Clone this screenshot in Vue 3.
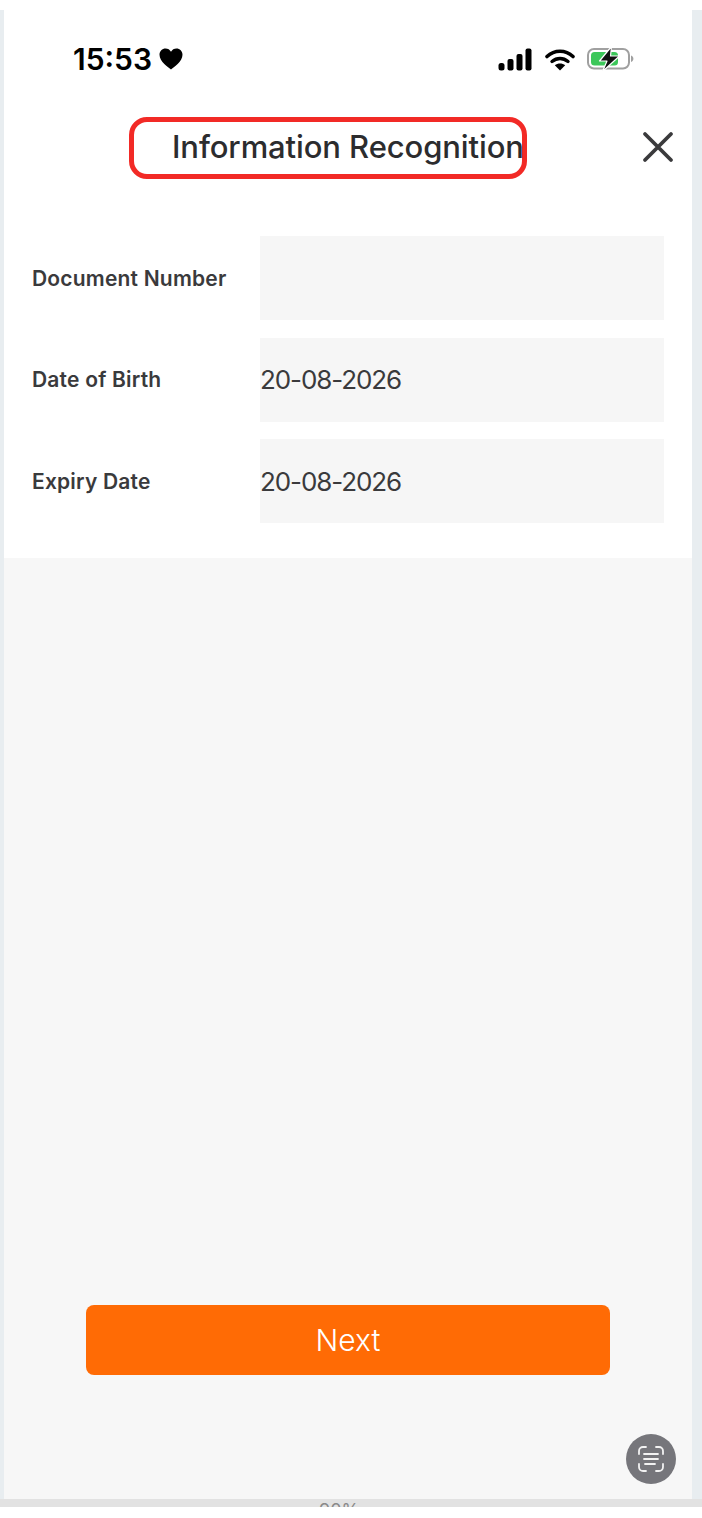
<template>
  <div class="page">
    <div class="shell">
      <div class="screen">
        <div class="status-bar">
          <div class="status-left">
            <span class="time">15:53</span>
            <svg class="heart" width="24" height="22" viewBox="0 0 24 22">
              <path d="M12 21.5C9.5 19.6 0.5 13.8 0.5 6.8 0.5 3 3.3 0.5 6.5 0.5 8.900 0.5 10.900 1.700 12 3.800 13.100 1.700 15.100 0.500 17.500 0.500 20.700 0.500 23.500 3 23.500 6.800 23.500 13.800 14.500 19.600 12 21.500Z" fill="#000" />
            </svg>
          </div>
          <div class="status-right">
            <svg width="35" height="23" viewBox="0 0 35 23">
              <rect x="0.500" y="15" width="6" height="7.500" rx="2.500" fill="#000" />
              <rect x="9.500" y="11" width="6" height="11.500" rx="2" fill="#000" />
              <rect x="18.500" y="6" width="6" height="16.500" rx="2" fill="#000" />
              <rect x="27.500" y="0.500" width="6" height="22" rx="2" fill="#000" />
            </svg>
            <svg width="30" height="23" viewBox="0 0 30 23">
              <path d="M2 8.500C9.500 1.500 20.500 1.500 28 8.500" fill="none" stroke="#000" stroke-width="3.600" stroke-linecap="round" />
              <path d="M7 13.500C11.800 9.500 18.200 9.500 23 13.500" fill="none" stroke="#000" stroke-width="3.400" stroke-linecap="round" />
              <path d="M15 22.500 9.800 17.300C12.800 14.800 17.200 14.800 20.200 17.300Z" fill="#000" />
            </svg>
            <svg class="battery" width="48" height="26" viewBox="0 0 48 26">
              <rect x="1" y="3" width="41" height="19.500" rx="6" fill="none" stroke="#a0a0a0" stroke-width="2" />
              <path d="M44 9.500v6.500c1.500-.4 2.400-1.700 2.400-3.250s-.9-2.850-2.400-3.250Z" fill="#a0a0a0" />
              <rect x="4" y="6" width="27" height="13.500" rx="3.500" fill="#3cc75a" />
              <path d="M24.500 0.500 12.500 15H20L15.500 25.500 32.500 10H23.500Z" fill="#111" stroke="#fff" stroke-width="1.200" stroke-linejoin="round" />
            </svg>
          </div>
        </div>

        <div class="header">
          <div class="title-box">
            <span class="title">Information Recognition</span>
          </div>
          <svg class="close" width="32" height="32" viewBox="0 0 32 32">
            <path d="M3 3 29 29M29 3 3 29" fill="none" stroke="#3a3a3c" stroke-width="3.800" stroke-linecap="round" />
          </svg>
        </div>

        <div class="form">
          <div v-for="row in rows" :key="row.label" class="form-row">
            <span class="form-label">{{ row.label }}</span>
            <div class="form-value">{{ row.value }}</div>
          </div>
        </div>

        <div class="main">
          <button class="next-btn">Next</button>
          <div class="scan-btn">
            <svg width="26" height="26" viewBox="0 0 26 26">
              <path d="M1 8V5C1 2.800 2.800 1 5 1H8M18 1H21C23.200 1 25 2.800 25 5V8M25 18V21C25 23.200 23.200 25 21 25H18M8 25H5C2.800 25 1 23.200 1 21V18" fill="none" stroke="#f2f2f2" stroke-width="1.800" stroke-linecap="round" />
              <path d="M6 8H20M6 13H20M7 18H17" fill="none" stroke="#f2f2f2" stroke-width="1.800" stroke-linecap="round" />
            </svg>
          </div>
        </div>
      </div>
    </div>
    <div class="bottom-strip">
      <span class="zoom-text">90%</span>
    </div>
  </div>
</template>

<script setup>
const rows = [
  { label: 'Document Number', value: '' },
  { label: 'Date of Birth', value: '20-08-2026' },
  { label: 'Expiry Date', value: '20-08-2026' }
]
</script>

<style>
body {
  background: #fff;
}
</style>

<style scoped>
.page {
  width: 702px;
  height: 1518px;
  padding-top: 10px;
  box-sizing: border-box;
  background: #fff;
  overflow: hidden;
  font-family: Inter, "Liberation Sans", sans-serif;
}

.shell {
  height: 1489px;
  padding: 0 10px 0 4px;
  box-sizing: border-box;
  background: #e8edf0;
}

.screen {
  height: 100%;
  display: flex;
  flex-direction: column;
  background: #fff;
}

.status-bar {
  height: 100px;
  display: flex;
  align-items: center;
  justify-content: space-between;
  padding: 0 57px 0 69px;
  box-sizing: border-box;
}

.status-left,
.status-right {
  display: flex;
  align-items: center;
}

.status-left {
  gap: 7px;
  margin-top: -2px;
}

.status-right {
  gap: 12px;
  margin-top: -2px;
}

.time {
  font-size: 30px;
  font-weight: 600;
  color: #000;
}

.header {
  display: flex;
  align-items: center;
  padding: 7px 18px 0 125px;
}

.title-box {
  width: 398px;
  height: 62px;
  box-sizing: border-box;
  border: 5px solid #f22a26;
  border-radius: 18px;
  padding: 0 0 3px 38px;
  display: flex;
  align-items: center;
  white-space: nowrap;
}

.title {
  font-size: 31px;
  font-weight: 500;
  letter-spacing: -0.1px;
  color: #2c2c2e;
}

.close {
  margin-left: auto;
  margin-top: -2px;
}

.form {
  padding: 57px 28px 35px;
  display: flex;
  flex-direction: column;
  gap: 17.500px;
}

.form-row {
  display: flex;
  align-items: center;
}

.form-label {
  width: 228px;
  font-size: 21px;
  font-weight: 600;
  letter-spacing: 0.200px;
  color: #3a3a3c;
}

.form-value {
  flex: 1;
  height: 84px;
  display: flex;
  align-items: center;
  background: #f6f6f6;
  font-size: 26px;
  letter-spacing: -1.100px;
  color: #3a3a3c;
}

.main {
  flex: 1;
  position: relative;
  background: #f7f7f7;
}

.next-btn {
  display: block;
  width: 524px;
  height: 70px;
  margin: 747px 0 0 82px;
  border: none;
  border-radius: 8px;
  background: #ff6b05;
  color: #fff;
  font-family: inherit;
  font-size: 30px;
  font-weight: 300;
}

.scan-btn {
  position: absolute;
  right: 16px;
  bottom: 15px;
  width: 50px;
  height: 50px;
  border-radius: 50%;
  background: #76767b;
  display: flex;
  align-items: center;
  justify-content: center;
}

.bottom-strip {
  height: 8px;
  background: #e2e2e2;
  overflow: hidden;
  line-height: 1;
}

.zoom-text {
  display: block;
  margin-left: 319px;
  padding-top: 3px;
  font-size: 18px;
  color: #8a8a8a;
}
</style>
